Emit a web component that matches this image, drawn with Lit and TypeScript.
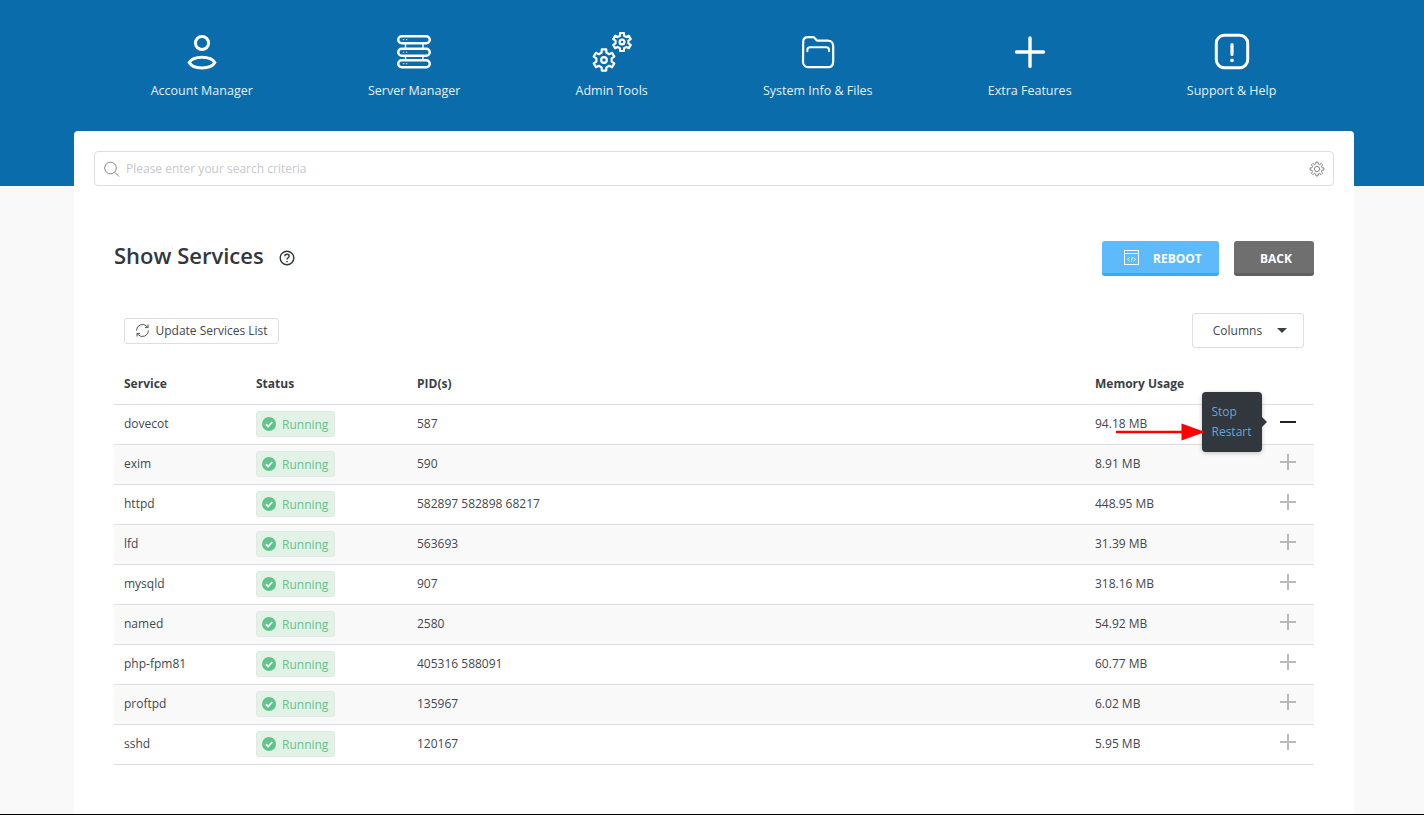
import { LitElement, html, css, svg } from 'lit';
import { customElement } from 'lit/decorators.js';

// rounded cog outline, stroked rather than filled
function gearPath(cx: number, cy: number, outer: number, inner: number, teeth = 6) {
  const pts: string[] = [];
  const step = (Math.PI * 2) / teeth;
  for (let i = 0; i < teeth; i++) {
    const a = i * step - Math.PI / 2;
    const w = step * 0.2;
    const at = (r: number, ang: number) =>
      `${(cx + r * Math.cos(ang)).toFixed(2)} ${(cy + r * Math.sin(ang)).toFixed(2)}`;
    pts.push(`${i ? 'L' : 'M'}${at(inner, a - w * 1.5)}`);
    pts.push(`L${at(outer, a - w)}`);
    pts.push(`L${at(outer, a + w)}`);
    pts.push(`L${at(inner, a + w * 1.5)}`);
  }
  return pts.join(' ') + ' Z';
}

const navIcons = {
  user: svg`<circle cx="24" cy="16" r="6.6"/><path d="M11.200 35.600c2-3.600 7-5.400 12.800-5.400s10.800 1.800 12.800 5.400c-2 3.600-7 5.400-12.800 5.400s-10.800-1.800-12.800-5.400z"/>`,
  server: svg`
    <g stroke-width="2.400">
      <rect x="8.200" y="9.200" width="31.600" height="7" rx="3.500"/>
      <rect x="8.200" y="21.700" width="31.600" height="7" rx="3.500"/>
      <rect x="8.200" y="33.200" width="31.600" height="7" rx="3.500"/>
    </g>
    <path d="M15.500 16.500v5M33 16.500v5M15.500 29v4M33 29v4" stroke-width="1.400"/>
    <path d="M13.300 12.700h.5M16.300 12.700h.5M13.300 25.200h.5M16.300 25.200h.5M13.300 36.700h.5M16.300 36.700h.5" stroke-width=".9"/>`,
  gears: svg`
    <g stroke-linejoin="round" stroke-width="2.200">
      <path d=${gearPath(34, 15, 9.2, 6.6)}/>
      <circle cx="34" cy="15" r="2.400"/>
      <path d=${gearPath(16, 33, 10.8, 7.8)}/>
      <circle cx="16" cy="33" r="2.800"/>
    </g>`,
  folder: svg`
    <path d="M9.200 15c0-3 2-4.800 4.800-4.800h5c2 0 2.800 3 4.600 3.400h10c3.400 0 5.600 2.200 5.600 5.400v15.400c0 3.600-2.200 5.800-5.600 5.800h-18.800c-3.400 0-5.800-2.200-5.800-5.800z" stroke-width="2.200"/>
    <path d="M13.400 24.200v-1.400c0-1.600 1-2.600 2.600-2.600h16.400c1.600 0 2.600 1 2.600 2.600v1.400" stroke-width="2"/>`,
  plus: svg`<path d="M24 11v28.500M10.500 25h27" stroke-width="3.400"/>`,
  alert: svg`
    <rect x="8.300" y="8.300" width="31.400" height="32.400" rx="8"/>
    <path d="M24 17.500v10" stroke-width="3.200"/>
    <path d="M24 33.300v.2" stroke-width="3.600"/>`,
};

const nav = [
  { label: 'Account Manager', icon: navIcons.user },
  { label: 'Server Manager', icon: navIcons.server },
  { label: 'Admin Tools', icon: navIcons.gears },
  { label: 'System Info & Files', icon: navIcons.folder },
  { label: 'Extra Features', icon: navIcons.plus },
  { label: 'Support & Help', icon: navIcons.alert },
];

const services = [
  { name: 'dovecot', pid: '587', mem: '94.18 MB', open: true },
  { name: 'exim', pid: '590', mem: '8.91 MB' },
  { name: 'httpd', pid: '582897 582898 68217', mem: '448.95 MB' },
  { name: 'lfd', pid: '563693', mem: '31.39 MB' },
  { name: 'mysqld', pid: '907', mem: '318.16 MB' },
  { name: 'named', pid: '2580', mem: '54.92 MB' },
  { name: 'php-fpm81', pid: '405316 588091', mem: '60.77 MB' },
  { name: 'proftpd', pid: '135967', mem: '6.02 MB' },
  { name: 'sshd', pid: '120167', mem: '5.95 MB' },
];

@customElement('app-root')
export class AppRoot extends LitElement {
  static styles = css`
    :host {
      display: flex;
      flex-direction: column;
      height: 815px;
      overflow: hidden;
      background: #f9f9f9;
      font-family: "Open Sans", "Noto Sans", sans-serif;
      font-size: 12px;
      color: #42474e;
      border-bottom: 1px solid #000;
      box-sizing: border-box;
    }
    .top {
      height: 186px;
      flex: none;
      background: #0b6cab;
      box-sizing: border-box;
      padding-top: 27px;
    }
    .nav {
      width: 1280px;
      margin-left: 73.5px;
      display: flex;
      justify-content: center;
      gap: 115.2px;
    }
    .nav-item {
      display: flex;
      flex-direction: column;
      align-items: center;
      color: #e6f1f8;
      font-size: 12.5px;
      line-height: 20px;
      white-space: nowrap;
    }
    .nav-item svg {
      width: 48px;
      height: 48px;
      margin-bottom: 6px;
      fill: none;
      stroke: #fff;
      stroke-width: 3;
      stroke-linecap: round;
    }
    .card {
      flex: 1;
      width: 1280px;
      margin: -55px 0 0 74px;
      background: #fff;
      border-radius: 4px 4px 0 0;
      padding: 20px 20px 0;
      box-sizing: border-box;
      position: relative;
    }
    .search {
      height: 35px;
      border: 1px solid #dedede;
      border-radius: 4px;
      display: flex;
      align-items: center;
      padding: 0 8px;
      box-sizing: border-box;
      gap: 5px;
      color: #c6c8cb;
      background: #fff;
    }
    .search span { flex: 1; }
    .search svg { fill: none; stroke: #888; stroke-width: 1; flex: none; }
    .head {
      display: flex;
      align-items: center;
      margin: 55px 20px 0;
      height: 35px;
    }
    h1 {
      margin: 0 0 7px;
      font-size: 22px;
      font-weight: 600;
      color: #32373e;
      line-height: 30px;
    }
    .help { margin: 0 0 2px 15px; fill: none; stroke: #32373e; }
    .spacer { flex: 1; }
    .btn {
      height: 35px;
      box-sizing: border-box;
      border-radius: 3px;
      color: #fff;
      font-weight: 700;
      font-size: 12px;
      display: flex;
      align-items: center;
      padding-top: 2px;
    }
    .reboot {
      width: 117px;
      padding-left: 22px;
      background: #5ebafa;
      border-bottom: 3px solid #38a9f6;
      gap: 14px;
    }
    .reboot svg { fill: none; stroke: #fff; margin-top: -2px; }
    .back {
      width: 80px;
      margin-left: 15px;
      padding-left: 26px;
      background: #6f6f6f;
      border-bottom: 3px solid #5f5f5f;
    }
    .tools {
      display: flex;
      align-items: flex-start;
      justify-content: space-between;
      margin: 37px 30px 0;
      height: 55px;
    }
    .update {
      margin-top: 5px;
      width: 155px;
      height: 26px;
      box-sizing: border-box;
      padding-bottom: 2px;
      border: 1px solid #dedede;
      border-radius: 3px;
      display: flex;
      align-items: center;
      justify-content: center;
      gap: 5px;
    }
    .update svg { fill: none; stroke: #555; }
    .columns {
      width: 112px;
      height: 35px;
      box-sizing: border-box;
      padding-left: 4px;
      border: 1px solid #dedede;
      border-radius: 3px;
      display: flex;
      align-items: center;
      justify-content: center;
      gap: 15px;
    }
    .caret {
      width: 0;
      height: 0;
      border-left: 5px solid transparent;
      border-right: 5px solid transparent;
      border-top: 5px solid #3a3f46;
    }
    .table-wrap { margin: 0 20px; position: relative; }
    table {
      width: 1200px;
      border-collapse: collapse;
      table-layout: fixed;
    }
    th, td { box-sizing: border-box; }
    th {
      text-align: left;
      font-weight: 700;
      color: #3a3f46;
      height: 36.5px;
      padding: 0 0 6px 10px;
      border-bottom: 1px solid #dedede;
    }
    td {
      height: 40px;
      padding: 0 0 2px 10px;
      border-bottom: 1px solid #dedede;
    }
    tr.even td { background: #f9f9f9; }
    .status {
      display: inline-flex;
      align-items: center;
      width: 79px;
      height: 26px;
      box-sizing: border-box;
      padding: 2px 0 0 5px;
      gap: 6px;
      background: #e2f2e7;
      border: 1px solid #dfeae2;
      border-radius: 3px;
      color: #62c58a;
      font-size: 12px;
      vertical-align: middle;
    }
    .status svg { margin-top: -2px; }
    .toggle { padding: 0 0 6px; text-align: center; }
    .toggle svg { display: block; margin: 0 auto; stroke: #b9b9b9; stroke-width: 2; }
    .toggle svg.open { stroke: #222; }
    .tip {
      position: absolute;
      left: 1088px;
      top: 24px;
      width: 60px;
      height: 60px;
      box-sizing: border-box;
      padding: 10px 0 0 9.5px;
      background: #32373e;
      border-radius: 4px;
      color: #66a6d2;
      line-height: 20px;
      box-shadow: 0 1px 4px rgba(0, 0, 0, 0.25);
    }
    .tip::after {
      content: "";
      position: absolute;
      right: -5px;
      top: 25px;
      border-left: 5px solid #32373e;
      border-top: 5px solid transparent;
      border-bottom: 5px solid transparent;
    }
    .arrow { position: absolute; left: 1002px; top: 55px; }
  `;

  private gearSmall() {
    return html`<svg width="16" height="16" viewBox="0 0 16 16"><path stroke-linejoin="round" d=${gearPath(8, 8, 7, 5.2, 8)}></path><circle cx="8" cy="8" r="2.600"></circle></svg>`;
  }

  render() {
    return html`
      <div class="top">
        <div class="nav">
          ${nav.map(n => html`
            <div class="nav-item">
              <svg viewBox="0 0 48 48">${n.icon}</svg>
              ${n.label}
            </div>`)}
        </div>
      </div>
      <div class="card">
        <div class="search">
          <svg width="18" height="18" viewBox="0 0 18 18"><circle cx="7.500" cy="8" r="5.800"></circle><path d="M11.700 12.200l4.300 4.300"></path></svg>
          <span>Please enter your search criteria</span>
          ${this.gearSmall()}
        </div>
        <div class="head">
          <h1>Show Services</h1>
          <svg class="help" width="16" height="16" viewBox="0 0 16 16">
            <circle cx="8" cy="8" r="6.800" stroke-width="1.400"></circle>
            <path d="M5.800 6.300c0-1.300 1-2 2.200-2s2.200.8 2.200 1.900c0 1.500-2.200 1.700-2.200 3.300" stroke-width="1.400"></path>
            <path d="M8 11v1.300" stroke-width="1.400"></path>
          </svg>
          <div class="spacer"></div>
          <div class="btn reboot">
            <svg width="15" height="15" viewBox="0 0 15 15">
              <rect x=".5" y=".5" width="14" height="14"></rect>
              <path d="M.5 3.500h14"></path>
              <path d="M5.500 7.500l-2 1.800 2 1.800M9.500 7.500l2 1.800-2 1.800M8.400 7l-1 4.500" stroke-width=".8"></path>
            </svg>
            REBOOT
          </div>
          <div class="btn back">BACK</div>
        </div>
        <div class="tools">
          <div class="update">
            <svg width="15" height="15" viewBox="0 0 15 15">
              <path d="M1.500 7.500a6 6 0 0 1 10.300-4.200l1.200 1.300M13.500 7.500a6 6 0 0 1-10.300 4.200L2 10.400"></path>
              <path d="M13 1.500v3.100h-3M2 13.500v-3.100h3"></path>
            </svg>
            Update Services List
          </div>
          <div class="columns">Columns <span class="caret"></span></div>
        </div>
        <div class="table-wrap">
          <table>
            <colgroup>
              <col style="width:132px" /><col style="width:161px" /><col style="width:678px" /><col style="width:177px" /><col style="width:52px" />
            </colgroup>
            <thead>
              <tr><th>Service</th><th>Status</th><th>PID(s)</th><th>Memory Usage</th><th></th></tr>
            </thead>
            <tbody>
              ${services.map((s, i) => html`
                <tr class=${i % 2 ? 'even' : ''}>
                  <td>${s.name}</td>
                  <td>
                    <span class="status">
                      <svg width="14" height="14" viewBox="0 0 14 14"><circle cx="7" cy="7" r="7" fill="#5fc48a"></circle><path d="M3.800 7.200l2.300 2.300 4.200-4.500" fill="none" stroke="#fff" stroke-width="1.800"></path></svg>
                      Running
                    </span>
                  </td>
                  <td>${s.pid}</td>
                  <td>${s.mem}</td>
                  <td class="toggle">
                    <svg class=${s.open ? 'open' : ''} width="16" height="16" viewBox="0 0 16 16">
                      <path d=${s.open ? 'M0 8h16' : 'M0 8h16M8 0v16'}></path>
                    </svg>
                  </td>
                </tr>`)}
            </tbody>
          </table>
          <div class="tip">Stop<br />Restart</div>
          <svg class="arrow" width="89" height="18" viewBox="0 0 89 18">
            <path d="M0 9h66" stroke="#f00" stroke-width="2.500" fill="none"></path>
            <path d="M65.500 .5l23.500 8.500-23.500 8.500z" fill="#f00"></path>
          </svg>
        </div>
      </div>
    `;
  }
}
